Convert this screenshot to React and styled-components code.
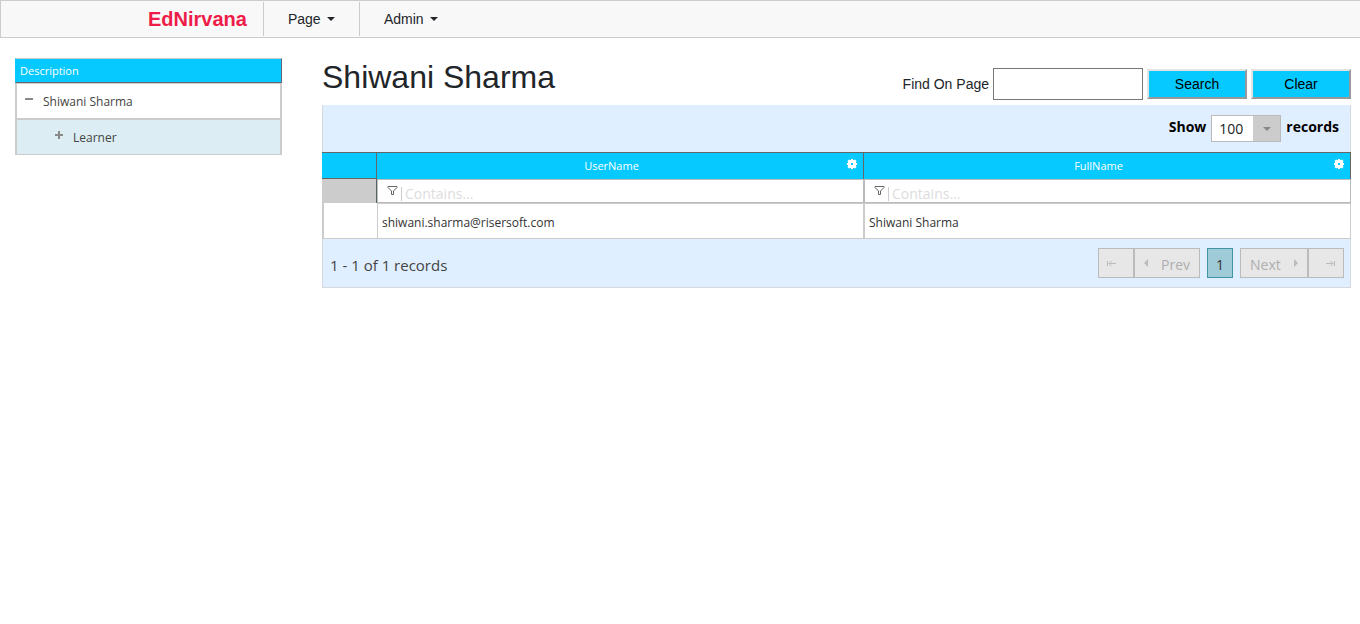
import React from "react";
import styled, { createGlobalStyle } from "styled-components";

const sans = `"Liberation Sans", Arial, sans-serif`;
const gridFont = `"Open Sans", "Noto Sans", sans-serif`;
const cyan = "#06c9ff";

const GlobalStyle = createGlobalStyle`
  * { box-sizing: border-box; }
  body { margin: 0; background: #fff; color: #212529; font: 14px/20px ${sans}; }
  button, input, select { font: inherit; margin: 0; }
`;

const NavBar = styled.nav`
  display: flex;
  height: 38px;
  padding: 1px 0 1px 131px;
  border: 1px solid #ccc;
  border-right: 0;
  background: #f8f8f8;
`;
const Brand = styled.a`
  padding: 0 16px;
  color: #ee1c48;
  font-size: 20px;
  font-weight: bold;
  line-height: 34px;
  text-decoration: none;
`;
const NavButton = styled.button`
  display: flex;
  align-items: center;
  gap: 6px;
  min-width: 96px;
  padding: 0 24px;
  border: 0;
  border-left: 1px solid #ccc;
  background: none;
  color: #212529;
`;
const Main = styled.main`
  display: grid;
  grid-template-columns: minmax(0, 267fr) minmax(0, 1029fr);
  column-gap: 40px;
  align-items: start;
  padding: 20px 9px 0 15px;
`;

const Tree = styled.table`
  width: 100%;
  border-collapse: separate;
  border-spacing: 0;
  font-family: ${gridFont};
  font-size: 12px;
`;
const TreeHead = styled.th`
  height: 25px;
  padding: 0 4px;
  border: 1px solid;
  border-color: #ccc #667 #667 ${cyan};
  background: ${cyan};
  color: #fff;
  font-size: 11px;
  font-weight: normal;
  line-height: 20px;
  text-align: left;
`;
const TreeCell = styled.td`
  height: 36px;
  padding: 2px 0 0 ${(p) => (p.$level ? 36 : 6)}px;
  border: solid #ccc;
  border-width: 1px 2px;
  background: ${(p) => (p.$level ? "#dceef3" : "#fff")};
  color: #444;
`;
const TreeItem = styled.div`
  display: flex;
  align-items: center;
  gap: 8px;
`;
const Expander = styled.button`
  display: flex;
  width: 12px;
  height: 18px;
  padding: 0;
  border: 0;
  background: none;
`;

const TitleRow = styled.header`
  display: flex;
  justify-content: space-between;
  height: 47px;
`;
const Title = styled.h1`
  margin: 0;
  font-size: 32px;
  font-weight: normal;
  line-height: 38px;
`;
const SearchForm = styled.form`
  display: flex;
  align-items: center;
  gap: 4px;
  height: 32px;
  margin-top: 10px;
`;
const SearchInput = styled.input`
  width: 150px;
  height: 32px;
  border: 1px solid #767676;
`;
const ActionButton = styled.button`
  width: 100px;
  height: 30px;
  padding: 0;
  border: 2px solid;
  border-color: #e3e3e3 #999 #999 #e3e3e3;
  background: ${cyan};
  color: #000;
`;

const Bar = styled.div`
  display: flex;
  align-items: center;
  border: 0 solid #d5d9dd;
  border-width: 0 1px;
  background: #e0efff;
  font-family: ${gridFont};
`;
const PageSizeBar = styled(Bar)`
  justify-content: flex-end;
  gap: 5px;
  height: 47px;
  padding: 0 11px 3px 0;
  color: #000;
  font-weight: bold;
`;
const SelectBox = styled.div`
  display: grid;
  align-items: center;
  width: 70px;
  margin-top: 3px;
  font-weight: normal;

  select, svg { grid-area: 1 / 1; }
  svg { justify-self: end; margin-right: 10px; pointer-events: none; }
`;
const Select = styled.select`
  appearance: none;
  width: 100%;
  height: 27px;
  padding: 0 7px;
  border: 1px solid #bbb;
  border-radius: 0;
  background: linear-gradient(to left, #ccc 27px, #fff 27px);
  color: #222;
`;

const Records = styled.table`
  width: 100%;
  table-layout: fixed;
  border-collapse: separate;
  border-spacing: 0;
  font-family: ${gridFont};
  font-size: 12px;
`;
const IndexCol = styled.col`
  width: 55px;
`;
const HeadCell = styled.th`
  height: 27px;
  padding: 0 5px 0 0;
  border: solid #666;
  border-width: 1px 1px ${(p) => (p.$index ? 1 : 0)}px 0;
  background: ${cyan};
  color: #fff;
  font-size: 11px;
  font-weight: normal;
`;
const HeadContent = styled.div`
  display: grid;
  grid-template-columns: 1fr 12px;
  align-items: center;
`;
const IconButton = styled.button`
  display: flex;
  justify-content: center;
  padding: 0 0 ${(p) => p.$lift || 4}px;
  border: 0;
  background: none;
  color: inherit;
`;
const FilterCell = styled.td`
  height: 24px;
  padding: 0 0 0 9px;
  border: 1px solid #bbb;
`;
const FilterIndex = styled.td`
  padding: 0;
  border-right: 1px solid #566;
  background: #ccc;
`;
const Filter = styled.div`
  display: flex;
  align-items: center;
  height: 22px;
`;
const FilterInput = styled.input`
  width: 100%;
  min-width: 0;
  height: 14px;
  margin: 5px 0 0 3px;
  padding: 0 3px;
  border: 0;
  border-left: 1px solid #ccc;
  outline: 0;
  background: none;
  font-size: 14px;

  &::placeholder { color: #ddd; opacity: 1; }
`;
const Cell = styled.td`
  height: 36px;
  padding: 3px 4px 0;
  border: 1px solid #ccc;
  color: #333;
`;
const IndexCell = styled.td`
  border: solid #ccc;
  border-width: 0 0 1px 2px;
`;
const Footer = styled(Bar)`
  justify-content: space-between;
  height: 49px;
  padding: 0 6px 0 7px;
  border-bottom-width: 1px;
  color: #444;
`;
const RecordCount = styled.span`
  padding-top: 3px;
  font-size: 15px;
`;
const Pager = styled.nav`
  display: flex;
  gap: 7px;
`;
const PagerGroup = styled.div`
  display: flex;
`;
const PagerButton = styled.button`
  display: flex;
  align-items: center;
  justify-content: ${(p) => p.$justify || "space-between"};
  width: ${(p) => p.$width}px;
  height: 30px;
  padding: 0 ${(p) => p.$pad || 8}px;
  border: 1px solid ${(p) => (p.$current ? "#3f93a3" : "#bbb")};
  background: ${(p) => (p.$current ? "#9fcad7" : "#e7e7e7")};
  color: ${(p) => (p.$current ? "#333" : "#aeaeae")};

  span { padding-top: 3px; }
`;

const Caret = () => (
  <svg width="8" height="4" viewBox="0 0 8 4" aria-hidden="true">
    <path d="M0 0h8L4 4z" fill="#212529" />
  </svg>
);
const Triangle = ({ d }) => (
  <svg width="4" height="8" viewBox="0 0 4 8" aria-hidden="true">
    <path d={d} fill="#bbb" />
  </svg>
);
const EdgeArrow = ({ last }) => (
  <svg width="9" height="7" viewBox="0 0 9 7" fill="none" stroke="#bbb" aria-hidden="true">
    <path d={last ? "M8.5 1v5M0 3.5h7M4.5 1L7 3.5 4.5 6" : "M.5 1v5M9 3.5H2M4.5 1L2 3.5 4.5 6"} />
  </svg>
);
const Gear = () => (
  <svg width="10" height="10" viewBox="0 0 10 10" aria-hidden="true">
    <path
      fill="#fff"
      fillRule="evenodd"
      d="M4 0h2v1h1l1-.5L9.5 2 9 3v1h1v2H9v1l.5 1L8 9.500 7 9H6v1H4V9H3l-1 .5L.5 8 1 7V6H0V4h1V3L.5 2 2 .5 3 1h1zM4 4v2h2V4z"
    />
  </svg>
);
const Funnel = () => (
  <svg width="11" height="9" viewBox="0 0 11 9" fill="none" stroke="#666" aria-hidden="true">
    <path d="M1 .5h9v1L6.5 5v3.5h-2V5L1 1.5z" />
  </svg>
);

const treeRows = [
  { name: "Shiwani Sharma", level: 0, open: true },
  { name: "Learner", level: 1, open: false },
];
const columns = ["UserName", "FullName"];
const records = [["shiwani.sharma@risersoft.com", "Shiwani Sharma"]];

export default function App() {
  return (
    <>
      <GlobalStyle />
      <NavBar>
        <Brand href="#">EdNirvana</Brand>
        <NavButton>Page <Caret /></NavButton>
        <NavButton>Admin <Caret /></NavButton>
      </NavBar>
      <Main>
        <Tree>
          <thead>
            <tr><TreeHead>Description</TreeHead></tr>
          </thead>
          <tbody>
            {treeRows.map((row) => (
              <tr key={row.name}>
                <TreeCell $level={row.level}>
                  <TreeItem>
                    <Expander aria-label={row.open ? "Collapse" : "Expand"}>
                      <svg width="12" height="12" viewBox="0 0 12 12" aria-hidden="true">
                        <path
                          d={row.open ? "M2 5h8v2H2z" : "M2 5h3V2h2v3h3v2H7v3H5V7H2z"}
                          fill="#888"
                        />
                      </svg>
                    </Expander>
                    <span>{row.name}</span>
                  </TreeItem>
                </TreeCell>
              </tr>
            ))}
          </tbody>
        </Tree>
        <section>
          <TitleRow>
            <Title>Shiwani Sharma</Title>
            <SearchForm onSubmit={(e) => e.preventDefault()}>
              <label htmlFor="find">Find On Page</label>
              <SearchInput id="find" type="text" />
              <ActionButton type="submit">Search</ActionButton>
              <ActionButton type="reset">Clear</ActionButton>
            </SearchForm>
          </TitleRow>
          <PageSizeBar>
            <label htmlFor="size">Show</label>
            <SelectBox>
              <Select id="size" defaultValue="100">
                <option>25</option>
                <option>50</option>
                <option>100</option>
              </Select>
              <svg width="8" height="4" viewBox="0 0 8 4" aria-hidden="true">
                <path d="M0 0h8L4 4z" fill="#888" />
              </svg>
            </SelectBox>
            <span>records</span>
          </PageSizeBar>
          <Records>
            <colgroup>
              <IndexCol />
              <col />
              <col />
            </colgroup>
            <thead>
              <tr>
                <HeadCell $index />
                {columns.map((name) => (
                  <HeadCell key={name}>
                    <HeadContent>
                      <span>{name}</span>
                      <IconButton aria-label={`${name} options`}><Gear /></IconButton>
                    </HeadContent>
                  </HeadCell>
                ))}
              </tr>
            </thead>
            <tbody>
              <tr>
                <FilterIndex />
                {columns.map((name) => (
                  <FilterCell key={name}>
                    <Filter>
                      <IconButton $lift={2} aria-label={`Filter ${name}`}><Funnel /></IconButton>
                      <FilterInput aria-label={`${name} contains`} placeholder="Contains..." />
                    </Filter>
                  </FilterCell>
                ))}
              </tr>
              {records.map((record) => (
                <tr key={record[0]}>
                  <IndexCell />
                  {record.map((value) => (
                    <Cell key={value}>{value}</Cell>
                  ))}
                </tr>
              ))}
            </tbody>
          </Records>
          <Footer>
            <RecordCount>1 - 1 of 1 records</RecordCount>
            <Pager aria-label="Pages">
              <PagerGroup>
                <PagerButton $width={36} $justify="flex-start" aria-label="First page">
                  <EdgeArrow />
                </PagerButton>
                <PagerButton $width={66} $pad={9}>
                  <Triangle d="M4 0v8L0 4z" /> <span>Prev</span>
                </PagerButton>
              </PagerGroup>
              <PagerButton $width={26} $justify="center" $current><span>1</span></PagerButton>
              <PagerGroup>
                <PagerButton $width={68} $pad={9}>
                  <span>Next</span> <Triangle d="M0 0v8l4-4z" />
                </PagerButton>
                <PagerButton $width={36} $justify="flex-end" aria-label="Last page">
                  <EdgeArrow last />
                </PagerButton>
              </PagerGroup>
            </Pager>
          </Footer>
        </section>
      </Main>
    </>
  );
}
